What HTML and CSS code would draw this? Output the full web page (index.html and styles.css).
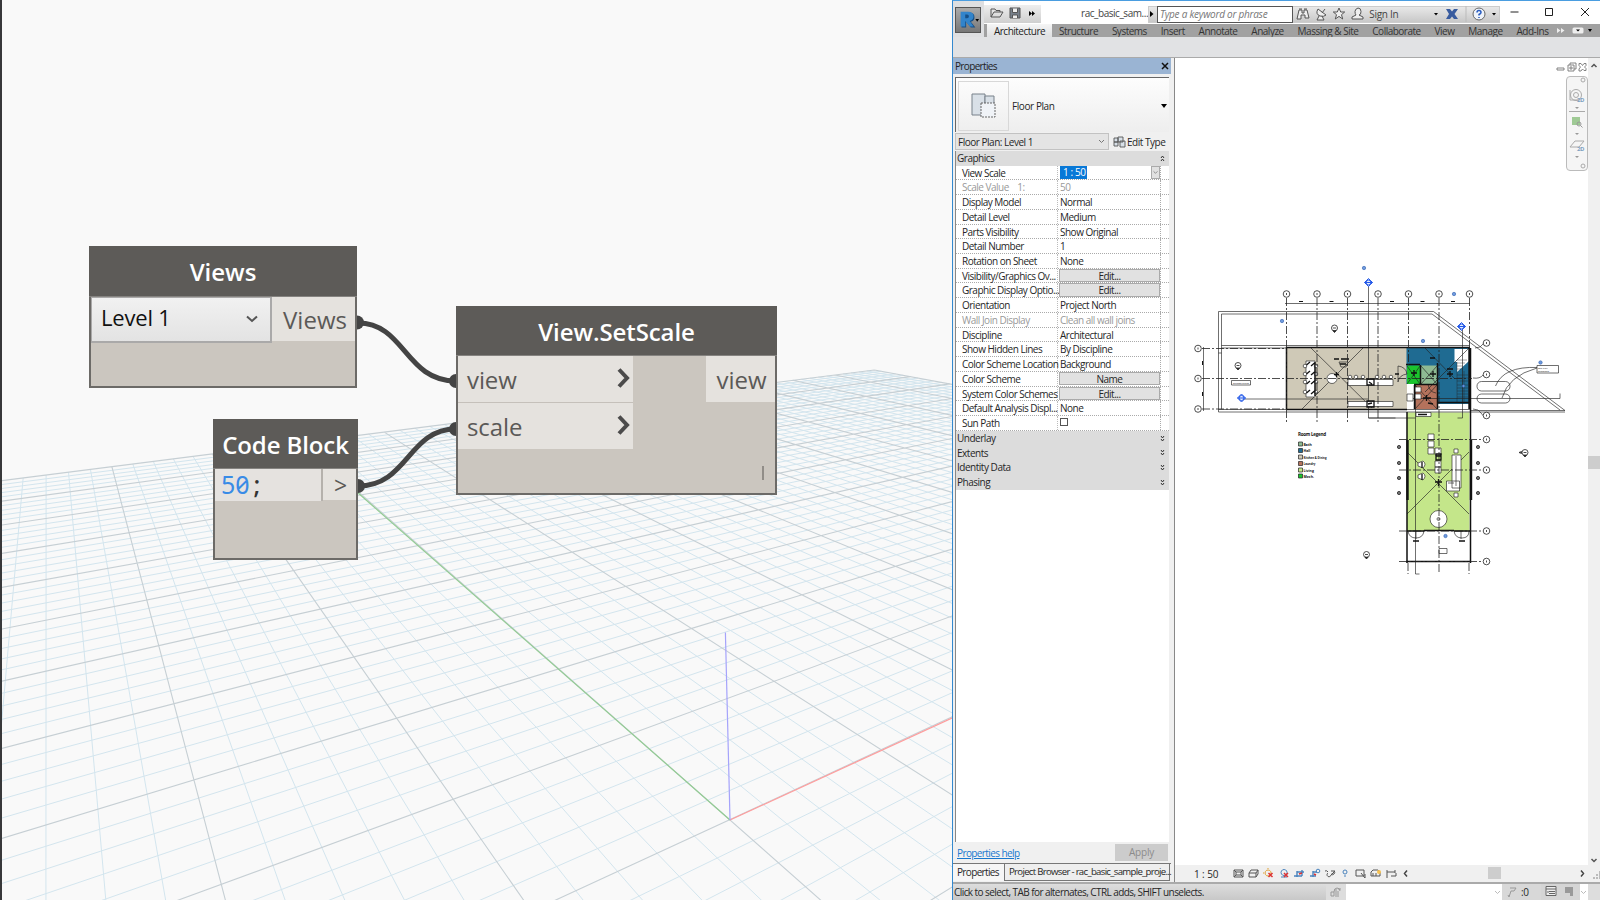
FILE: index.html
```html
<!DOCTYPE html>
<html lang="en">
<head>
<meta charset="utf-8">
<title>Dynamo and Revit</title>
<link rel="stylesheet" href="styles.css">
</head>
<body>
<main class="desk">
<section class="workspace">
  <svg class="scene" viewBox="0 0 952 900">
    <g id="minor" class="minor"></g><g id="major" class="major"></g>
    <path class="axis-y" d="M730 820L357 492"/><path class="axis-x" d="M730 820L952 718"/><path class="axis-z" d="M725.4 632.5L730 820"/>
  </svg>
  <svg class="wires" viewBox="0 0 952 900">
    <path d="M358 323C405 323 405 381 456 381M358 486C408 486 408 429 456 429"/>
    <g><circle cx="357" cy="322.500" r="7"/><circle cx="456" cy="381" r="7"/><circle cx="358" cy="486" r="7"/><circle cx="456" cy="429" r="7"/></g>
  </svg>
  <article class="node views">
    <header>Views</header>
    <div class="ports"><div class="select"><span>Level 1</span><svg width="12" height="8" viewBox="0 0 12 8"><path d="M1 1.500L6 6L11 1.500"/></svg></div><div class="port out">Views</div></div>
  </article>
  <article class="node code">
    <header>Code Block</header>
    <div class="ports"><div class="codetext"><b>50</b><i>;</i></div><div class="port gt">&gt;</div></div>
  </article>
  <article class="node setscale">
    <header>View.SetScale</header>
    <div class="ports"><div class="ins">
      <div class="port in">view<svg width="14" height="22" viewBox="0 0 14 22"><path d="M2 2.500L10 11L2 19.500"/></svg></div>
      <div class="port in">scale<svg width="14" height="22" viewBox="0 0 14 22"><path d="M2 2.500L10 11L2 19.500"/></svg></div></div>
      <div class="port out">view</div></div>
    <footer></footer>
  </article>
</section>

<section class="revit">
  <div class="chrome">
    <div class="app"><svg width="26" height="26" viewBox="0 0 26 26"><path class="rshade" d="M6 5h8q6 0 6 5q0 4-4 5l5 6h-5l-5-6v6H6z"/><path class="rface" d="M5 4h8q6 0 6 5q0 4-4 5l4 6h-4l-5-6v6H5zM10 7v4h2q2 0 2-2t-2-2z"/><path d="M21 12h4l-2 3z"/></svg></div>
    <div class="chrome-rows">
      <div class="titlebar">
        <div class="qat">
          <svg width="58" height="16" viewBox="0 0 58 16"><g class="ico"><path d="M7 12V4h4l1 1.500h4V7M7 12l3-5h9l-3 5z"/><path class="save" d="M26 3h10v10h-10z"/><path class="wh" d="M28.500 3.500v4h5v-4M28.500 13v-3h5v3"/></g><path d="M45 6l3 2.500l-3 2.500zM48 6l3 2.500l-3 2.500z"/></svg>
        </div>
        <span class="doc">rac_basic_sam...</span>
        <div class="info">
          <svg width="8" height="16" viewBox="0 0 8 16"><path d="M1 5l3.500 3l-3.500 3z"/></svg>
          <div class="search">Type a keyword or phrase</div>
          <svg width="72" height="16" viewBox="0 0 72 16"><g class="ico"><path class="wh" d="M4 4h3v3h2V4h3l2 8h-4V9H6v4H2zM4 3h3M9 3h3"/><path class="wh" d="M23 3q-3 5 2 7q4 1 6-1zM27 7l3-4M24 10l-2 4h7l-2-4"/><path class="wh" d="M44 2l1.700 4h4l-3.200 2.700l1.200 4.300l-3.700-2.600l-3.700 2.600l1.200-4.300L38.300 6h4z"/><path class="wh" d="M63 2q3 0 3 3.500T64 9l4 2v2H57v-2l4-2q-1-1-1-3.500T63 2z"/></g></svg>
          <span class="sign">Sign In</span>
          <svg class="exch" width="60" height="16" viewBox="0 0 60 16"><path d="M3 7h4l-2 2.500z"/><path class="x" d="M15 3h4l2 2.500L23 3h4l-3.500 5l3.500 5h-4l-2-2.500l-2 2.500h-4l3-5z"/><path class="sep" d="M35 0v16"/><circle class="q" cx="48" cy="8" r="6"/><path class="qm" d="M46 6.500q0-2 2-2t2 2q0 1-2 2v1M48 11v1"/></svg><svg width="8" height="16" viewBox="0 0 8 16"><path d="M1 7h4l-2 2.500z"/></svg>
        </div>
        <svg class="winbtn" width="100" height="20" viewBox="0 0 100 20"><path d="M10.500 9h8M45.500 5.500h7v7h-7zM81 5l8 8M89 5l-8 8"/></svg>
      </div>
      <nav class="tabs"><span class="on">Architecture</span><span>Structure</span><span>Systems</span><span>Insert</span><span>Annotate</span><span>Analyze</span><span>Massing &amp; Site</span><span>Collaborate</span><span>View</span><span>Manage</span><span>Add-Ins</span>
        <svg width="38" height="13" viewBox="0 0 38 13"><path class="w" d="M1 4l3.500 2.500L1 9zM5 4l3.500 2.500L5 9z"/><rect class="wb" x="16.500" y="3.500" width="11" height="6" rx="1.500"/><path d="M20 5.500h4l-2 2zM32 5h4l-2 3z"/></svg></nav>
    </div>
  </div>
  <div class="ribbon"></div>
  <div class="body">
    <aside class="props">
      <div class="ptitle"><span>Properties</span><svg width="8" height="8" viewBox="0 0 8 8"><path d="M1 1l6 6M7 1L1 7"/></svg></div>
      <div class="typesel"><div class="thumb"><svg width="30" height="30" viewBox="0 0 30 30"><path class="s" d="M3 3h13v21H3z"/><path class="s" d="M16 5h9v8h-9z"/><path class="f" d="M12 12h14v14H12z"/></svg></div><span>Floor Plan</span><svg width="6" height="4" viewBox="0 0 6 4"><path d="M0 0h6L3 4z"/></svg></div>
      <div class="inst"><div class="combo"><span>Floor Plan: Level 1</span><svg width="7" height="5" viewBox="0 0 7 5"><path d="M1 1l2.500 2.500L6 1"/></svg></div><svg class="et" width="13" height="12" viewBox="0 0 13 12"><path d="M1 2h4v4H1zM5 1h5v5H5zM1 6h4v4H1zM7 5h5v6H7z"/></svg><span>Edit Type</span></div>
      <div class="grid" id="grid"></div>
      <div class="blank"></div>
      <div class="help"><a>Properties help</a><span class="apply">Apply</span></div>
      <div class="ptabs"><span>Properties</span><span class="pb">Project Browser - rac_basic_sample_proje...</span></div>
    </aside>
    <section class="view">
      <div class="sheet">
<svg class="plan" viewBox="1175 58 413 806">
<defs><g id="bub"><circle r="3.300"/><path d="M0-1v2"/></g><g id="mark"><circle r="3"/><path class="k" d="M-1.500 2.700h3L0 4.500z"/><path d="M-1.500 0h3"/></g><g id="blued"><path d="M0-4L4 0L0 4L-4 0z"/><circle r="2.500"/><path d="M-4 0h8"/></g></defs>
<path fill="#cfc9b7" d="M1287 348h120v61h-120z"/><path fill="#1f6b92" d="M1406.500 348h63v56h-33v-20h-30z"/><path fill="#1bc42d" d="M1407 365.500h13V384h-13z"/><path fill="#8eba93" d="M1421 365.500h17V384h-17z"/><path fill="#b4725c" d="M1415 385h22.500v24H1415z"/><path fill="#c4e68a" d="M1407 412.500h62.500V531H1407z"/><path fill="#fff" d="M1454.500 349h14.500v12l-12 11v-10h-2.500zM1407 385h8v20h-8z"/>
<g class="ln">
<path d="M1218.500 412V311.500H1433.500L1565 410.500H1470M1221.500 409V314H1432L1560 410M1218.500 412H1565M1221.500 345.500h248M1221.500 348h65M1218.500 353h3M1218.500 409.500H1470M1203.500 347v64M1285 303.500h185M1368.500 285v133h27M1241 399h127M1407 398.500H1560v-5M1462.500 330v88h-5M1415.500 384v190h4M1368.500 418h47"/>
<path d="M1311 348l61 60M1363 348l-61 61M1407 452l62 62M1469 452l-62 62M1425 348l30 31M1469 348l-44 44M1415 385l22 24M1437 385l-22 24M1407 366l13 18M1420 366l-13 18M1421 366l16 18M1437 366l-16 18"/>
<path d="M1398 366q8 1 9 8q-8 1-9 8zM1428 384q1 8 8 9M1475 348q6 0 8-4t4-2M1473 378q7 1 10-3h3M1473 409q6 0 8 4t5 3M1408 531q1 7 8 7q7 0 8-7M1454 531q1 7 8 7q7 0 7-7M1416 531v8M1461 531v8M1495.500 386q8-20 42-18.500M1502 398q6-22 35-30"/>
<path d="M1457 360h10M1457 363h8M1457 366h6M1457 369h4M1457 375h11M1457 378h11M1457 381h11M1457 385h11M1457 388h11M1457 391h11M1457 394h11M1457 397h11M1457 362v40M1464 371v33" opacity=".6"/>
<rect x="1477" y="381.500" width="33" height="9.500" rx="4.500"/><rect x="1477" y="394" width="33" height="9" rx="4.500"/>
<path class="fw" d="M1306 361h9v36h-9zM1348 379.500h45v6h-45zM1348 401.500h45v5h-45zM1428 434h6v6h-6zM1428 441h6v6h-6zM1428 448h6v6h-6zM1435 448h6v7h-6zM1435 461h6v6h-6zM1435 467h6v6h-6zM1452 455h9v33h-9zM1454 449h4v4h-4zM1454 493h4v4h-4zM1446.500 481h13v10h-13zM1416 412.500h15v4h-15zM1415 387h6v5h-6zM1415 394h6v5h-6zM1231.500 380.500h19v4.500h-19zM1537 365.500h21.500v7.500H1537zM1439 548.500h8v5h-8zM1407 394h6v7h-6z"/>
<circle class="fw" cx="1332" cy="378.500" r="5"/><circle class="fw" cx="1438.500" cy="519" r="8.500"/><circle cx="1438.500" cy="519" r="1.500"/>
<g class="fw"><circle cx="1305" cy="366" r="1.800"/><circle cx="1305" cy="374" r="1.800"/><circle cx="1305" cy="382" r="1.800"/><circle cx="1305" cy="392" r="1.800"/><circle cx="1316" cy="366" r="1.800"/><circle cx="1316" cy="374" r="1.800"/><circle cx="1316" cy="382" r="1.800"/><circle cx="1316" cy="392" r="1.800"/><circle cx="1350" cy="377" r="1.800"/><circle cx="1356" cy="377" r="1.800"/><circle cx="1363" cy="377" r="1.800"/><circle cx="1377" cy="377" r="1.800"/><circle cx="1384" cy="377" r="1.800"/><circle cx="1391" cy="377" r="1.800"/><path d="M1418 463l5-2q4 3 0 7l-5-2zM1418 475l5-2q4 3 0 7l-5-2z"/></g>
<path d="M1339 362h9l-2 5h-5z"/><path d="M1456 456v30M1448 483h6"/>
</g>
<g class="thick"><path d="M1286.500 409.500V347.500H1470M1286.500 409.500H1407M1407 412V563M1470.500 348V563M1406 561.500h65M1407 531h17M1454 531h16M1424 530.500h30M1406 364.500h14M1420.500 365v20M1437.500 363v46M1414 384.500h24M1414.500 385v24M1438 402.500h31"/><path class="xt" d="M1469.500 348v61M1407.500 440v60M1471 440v60"/></g>
<g class="dark"><path d="M1306.500 365l3.500-3M1311 366l3.500-3M1306.500 374l3.500-3M1311 375l3.500-3M1306.500 384l3.500-3M1311 384l3.500-3M1306.500 393l3.500-3M1311 394l3.500-3M1315 362v34M1367 379h7v6h-7zM1367 401h7v6h-7zM1369 382l3 2M1368 404l4-1M1334 374.500h5M1336.500 372v5M1334 359h5M1341 359h8M1340 364h6M1411 373h6M1414 370v6M1430 374h6M1433 371v6M1447 374h6M1450 371v6M1447 369h6M1423 398h8M1426.500 395v6M1428 403l5 1M1435 482h7M1438.500 479v7M1436 454h5v6h-5zM1430 358h5M1436 456h5M1422 462v6M1422 474v6M1418 414.500h9M1413 541h6M1459 541h6M1395 374h4"/><path class="tick" d="M1299 301.500h4M1329.500 301.500h4M1360 301.500h4M1390 301.500h4M1420.500 301.500h4M1451 301.500h4M1202.500 361v4M1202.500 392v4"/></g>
<g class="dd"><path d="M1286.500 298v124M1317 298v124M1347.500 298v124M1378 298v124M1408.500 298v67M1439 298v275M1469.500 298v50M1202 348.500h84M1202 378.500h270M1202 409h84M1399 439.500h82M1399 470h82M1399 531h82M1399 561.500h82M1408 563v11M1469 563v11"/></g>
<g class="bub"><use href="#bub" x="1286.500" y="294"/><use href="#bub" x="1317" y="294"/><use href="#bub" x="1347.500" y="294"/><use href="#bub" x="1378" y="294"/><use href="#bub" x="1408.500" y="294"/><use href="#bub" x="1439" y="294"/><use href="#bub" x="1469.500" y="294"/><use href="#bub" x="1198" y="348.500"/><use href="#bub" x="1198" y="378.500"/><use href="#bub" x="1198" y="409"/><use href="#bub" x="1486.500" y="343"/><use href="#bub" x="1486.500" y="374.500"/><use href="#bub" x="1486.500" y="415.500"/><use href="#bub" x="1486.500" y="439.500"/><use href="#bub" x="1486.500" y="470"/><use href="#bub" x="1486.500" y="531"/><use href="#bub" x="1486.500" y="561.500"/>
<use href="#mark" x="1334.500" y="328"/><use href="#mark" x="1238" y="365.500"/><use href="#mark" x="1525" y="452.500"/><use href="#mark" x="1366.500" y="554.500"/></g>
<g class="cam"><circle cx="1399" cy="447" r="1.600"/><circle cx="1399" cy="463" r="1.600"/><circle cx="1399" cy="478" r="1.600"/><circle cx="1399" cy="493" r="1.600"/><circle cx="1478" cy="447" r="1.600"/><circle cx="1478" cy="463" r="1.600"/><circle cx="1478" cy="478" r="1.600"/><circle cx="1478" cy="493" r="1.600"/><path d="M1519 452.500l2.500-1v2z"/></g>
<g class="bl"><use href="#blued" x="1368.500" y="282.500"/><use href="#blued" x="1241.500" y="398"/><use href="#blued" x="1461.500" y="326.500"/></g>
<g class="bd"><circle cx="1364" cy="268" r="1.700"/><circle cx="1282" cy="321" r="1.700"/><circle cx="1454" cy="294" r="1.700"/><circle cx="1423" cy="341" r="1.700"/><circle cx="1540.500" cy="362.500" r="1.700"/><circle cx="1445.500" cy="536" r="1.700"/><circle cx="1463.500" cy="386" r="1.300"/></g>
<g class="leg"><path fill="#8eba93" d="M1298.500 442h4v4h-4z"/><path fill="#1f6b92" d="M1298.500 448.500h4v4h-4z"/><path fill="#cfc9b7" d="M1298.500 455h4v4h-4z"/><path fill="#b4725c" d="M1298.500 461.500h4v4h-4z"/><path fill="#c4e68a" d="M1298.500 468h4v4h-4z"/><path fill="#1bc42d" d="M1298.500 474h4v4h-4z"/></g>
<g class="lt"><text class="lh" x="1298" y="436" textLength="28">Room Legend</text><text x="1303.500" y="445.500">Bath</text><text x="1303.500" y="452">Hall</text><text x="1303.500" y="458.500" textLength="23" lengthAdjust="spacingAndGlyphs">Kitchen &amp; Dining</text><text x="1303.500" y="465" textLength="12" lengthAdjust="spacingAndGlyphs">Laundry</text><text x="1303.500" y="471.500">Living</text><text x="1303.500" y="478">Mech.</text><text class="sm" x="1233" y="384" textLength="16" lengthAdjust="spacingAndGlyphs">Outdoor Dining</text><text class="sm" x="1538" y="368.500">See Civil</text><text class="sm" x="1538" y="371.800">Drawings</text></g>
</svg>
      <div class="mdi"><svg width="32" height="10" viewBox="0 0 32 10"><path d="M1 6h7v2H1zM12 3h6v6h-6zM14 3V1h6v6h-2M14 5h2v2h-2zM23 1.500h2l1.500 2l1.500-2h2v2l-1.500 1.500l1.500 1.500v2h-2L26.500 7L25 9h-2V7l1.500-2L23 3.500z"/></svg></div>
      <div class="navbar"><svg width="22" height="95" viewBox="0 0 22 95"><g class="nv"><circle cx="17" cy="4" r="2"/><circle cx="10" cy="19" r="5.500"/><circle cx="10" cy="19" r="2.500"/><path d="M4 14v10h9"/><path d="M3 35.500h16M4 71l5-6h9l-5 6z"/><circle cx="17" cy="90" r="2"/></g><path class="gr" d="M6 41h8v8H6z"/><circle class="mg" cx="13" cy="48" r="2"/><path class="mg" d="M14.500 49.500l2 2"/><path d="M9 31h4l-2 2zM9 57h4l-2 2zM9 80h4l-2 2z"/><text x="11" y="26">2D</text><text x="11" y="75">2D</text></svg></div>
      </div>
      <div class="vscroll"><svg width="12" height="806" viewBox="0 0 12 806"><path d="M3.500 9L6 6.500L8.500 9M3.500 801L6 803.500L8.500 801"/><path class="thumbv" d="M0 398h12v13H0z"/></svg></div>
      <div class="viewbar"><span>1 : 50</span>
        <svg width="375" height="16" viewBox="1225 0 375 16"><g class="vi"><path d="M1234 3h9v7h-9zM1236 5h5v3h-5zM1234 3l2 2M1243 3l-2 2M1234 10l2-2M1243 10l-2-2M1249 6l2-3h7v4l-2 3h-7zM1249 6h7l2-3M1256 6v4"/><path class="org" d="M1268 3a3 3 0 1 0 .1 0M1268 1v1M1264 6h-1"/><path class="red" d="M1268.500 6l4 4M1272.500 6l-4 4"/><path class="blu" d="M1284 2.500a3 3 0 1 0 .1 0M1281 10h6"/><path class="red" d="M1284 6l4 4M1288 6l-4 4"/><path class="blu th2" d="M1297 4v6M1294 9h8M1297 5h7M1302 3v6M1313 4v6M1310 9h6M1313 5h4"/><circle class="blu" cx="1318" cy="4" r="1.800"/><path class="red" d="M1299 7l3-1M1314 7l2 1"/><path d="M1325 4q2-1 3 1M1328 6a2 2 0 1 0 3 2l4-4h-4M1334 4a2 2 0 1 1-3 3"/><circle class="blu" cx="1345" cy="5" r="2"/><path class="blu" d="M1345 8v2"/><path d="M1356 3h8v6h-8zM1361 6l4 5v-4M1371 9V5l2-2h5l2 2v4zM1373 6v3M1376 6v3M1387 3v8M1387 5h8M1395 3v3M1391 9h5v-3"/><circle class="yel" cx="1379" cy="5" r="2"/></g><path class="arr" d="M1407 3.500l-2.500 3L1407 9.500M1581 3.500l2.500 3l-2.500 3"/><path class="th" d="M1488 0h13v12h-13z"/><path class="grip" d="M1593 10h2v2h-2zM1596 7h2v2h-2zM1596 10h2v2h-2zM1599 4h1v8h-1z"/></svg></div>
    </section>
  </div>
  <footer class="status"><span class="msg">Click to select, TAB for alternates, CTRL adds, SHIFT unselects.</span>
    <div class="set"><svg width="12" height="12" viewBox="0 0 12 12"><path d="M1 6h3v4H1zM4 6q0-4 3-4t3 3M8 5v6M6 3v8M8 3h3"/></svg></div>
    <div class="ws"><svg width="7" height="5" viewBox="0 0 7 5"><path d="M1 1l2.500 2.500L6 1"/></svg></div>
    <div class="zero"><svg width="12" height="12" viewBox="0 0 12 12"><path d="M4 2h6l-2 3H5L3 11L2 9"/></svg>:0</div>
    <div class="opts"><svg width="43" height="14" viewBox="0 0 43 14"><path class="o" d="M5 2.500h10v9H5zM5 5h10M8 7.500h6M8 9.500h6M7 7v2"/><path class="g" d="M24 3h8v9h-3V9h-5z"/></svg></div>
    <div class="last"><svg width="7" height="5" viewBox="0 0 7 5"><path d="M1 1l2.500 2.500L6 1"/></svg></div><div class="end"></div>
  </footer>
</section>
</main>
<script src="app.js"></script>
</body>
</html>
```
FILE: styles.css
```css
*{box-sizing:border-box}
body{margin:0;width:1600px;height:900px;overflow:hidden;font-family:"Open Sans","Noto Sans",sans-serif}
svg{display:block;flex:none}
.desk{display:grid;grid-template-columns:952px 648px;height:900px}
.workspace{position:relative;background:#f9f9f9;border-left:2px solid #38383a;overflow:hidden}
.scene,.wires{position:absolute;left:-2px;top:0;width:952px;height:900px;fill:none}
.minor{stroke:#d3e5ee;stroke-width:1}
.major{stroke:#c6cfd4;stroke-width:1.100}
.axis-x{stroke:#ff9c9c;stroke-width:1.200}
.axis-y{stroke:#92cb92;stroke-width:1.200}
.axis-z{stroke:#a5a3fb;stroke-width:1.200}
.wires>path{stroke:#444;stroke-width:5}
.wires circle{fill:#444}
.node{position:absolute;background:#cbc6bf;border:2px solid #6c6a67;display:flex;flex-direction:column;color:#5b5957;font-size:24px}
.node header{background:#5d5b58;color:#fff;font-weight:600;display:flex;align-items:center;justify-content:center;white-space:nowrap;margin:-2px -2px 0;padding-top:1px;border-bottom:1px solid #858380}
.views{left:87px;top:246px;width:268px;height:142px}
.views header{height:51px}
.code{left:211px;top:419px;width:145px;height:141px}
.code header{height:50px;letter-spacing:-.1px}
.setscale{left:454px;top:306px;width:321px;height:189px}
.setscale header{height:50px;letter-spacing:-.08px}
.ports{display:flex;justify-content:space-between;align-items:flex-start}
.port{background:#e5e2de;display:flex;align-items:center}
.select{width:181px;height:46px;border:1px solid #aaa9a9;border-width:1px 2px 2px 1px;background:linear-gradient(#f1f1f1,#e3e3e3);display:flex;justify-content:space-between;padding:4px 12px 0 9px;color:#111;font-size:22px;line-height:30px;letter-spacing:-.2px}
.select svg{margin-top:13px}
.select path{fill:none;stroke:#555;stroke-width:2}
.views .out{width:83px;height:44px;justify-content:center;padding:1px 0 0 3px}
.codetext{width:108px;height:32px;background:#e5e2df;border-right:2px solid #b5b1ac;font-family:"Noto Sans",sans-serif;font-size:25px;line-height:31px;padding-left:6px;font-variant-numeric:slashed-zero}
.codetext b{font-weight:400;color:#398be6}
.codetext i{font-style:normal;font-weight:500;color:#333;padding-left:4px}
.gt{width:33px;height:31px;justify-content:center;font-size:23px;padding-left:2px}
.ins{display:flex;flex-direction:column;gap:1px;width:175px;background:#c5c0ba}
.in{height:46px;padding:1px 2px 1px 9px;justify-content:space-between;letter-spacing:-.1px}
.in svg{margin-top:-3px}
.in path{fill:none;stroke:#4c4b4b;stroke-width:4}
.setscale .out{width:69px;height:46px;justify-content:center;padding:1px 0 1px 2px}
.setscale footer{width:2px;height:14px;background:#918d88;margin:17px 0 0 304px}

.revit{border-left:1px solid #3489cf;border-top:1px solid #4a9de0;background:#f0f0f0;display:flex;flex-direction:column;font-size:10px;color:#262626;white-space:nowrap;min-width:0;letter-spacing:-.46px}
.chrome{height:36px;display:flex;background:#fff}
.app{width:31px;height:36px;background:#dedfe1;padding:6px 2px 3px}
.app svg{background:linear-gradient(#aaa,#777);border:1px solid #555}
.rshade{fill:#174f86}.rface{fill:#3284cb;fill-rule:evenodd}
.chrome-rows{flex:1;display:flex;flex-direction:column;min-width:0}
.titlebar{height:23px;display:flex;align-items:center;background:#fff;padding-top:3px}
.qat{height:18px;width:57px;background:linear-gradient(#eee,#cfcfcf)}
.ico{fill:none;stroke:#555;stroke-width:1}
.save{fill:#77808b}.wh{fill:#eee}
.doc{width:107px;padding:0 0 2px 40px;color:#444}
.info{height:17px;width:352px;background:linear-gradient(#e8e8e8,#c8c8c8);display:flex;align-items:center;border:1px solid #ccc}
.search{width:141px;height:17px;background:#fff;border:1px solid #555;color:#777;font-style:italic;padding:0 2px;line-height:15px;letter-spacing:-.25px;margin-right:2px}
.sign{width:66px;padding-left:2px;color:#444;letter-spacing:-.3px}
.x{fill:#395c9f}.sep{stroke:#bbb}.q{fill:#eef3fa;stroke:#666}.qm{fill:none;stroke:#285cc0;stroke-width:1.500}
.winbtn{margin-top:-3px}
.winbtn path{fill:none;stroke:#222}
.tabs{height:13px;background:#a1a1a1;display:flex;align-items:center;line-height:15px;color:#333;padding-left:3px;letter-spacing:-.5px}
.tabs span{padding:0 6.950px;height:13px;flex:none}
.tabs .on{background:linear-gradient(#f5f5f5,#dfe0e2);color:#222}
.tabs .w,.wb{fill:#eee}
.tabs svg{margin-left:1px}
.ribbon{height:21px;background:#e1e2e4;border-bottom:1px solid #aaa}
.body{flex:1;display:flex;min-height:0}
.props{width:218px;background:#f0f0f0;display:flex;flex-direction:column}
.ptitle{height:16px;background:#9ab4d3;display:flex;justify-content:space-between;align-items:center;padding:0 2px;color:#222}
.ptitle span{letter-spacing:-.65px}
.ptitle path{stroke:#111;stroke-width:1.500}
.typesel{height:55px;margin:3px 2px 0 2px;border:1px solid #666;border-width:1px 0 0 1px;background:linear-gradient(#fdfdfd,#eee);display:flex;align-items:center;padding:3px 2px 1px}
.thumb{width:51px;height:50px;border:1px solid #d8d8d8;display:flex;align-items:center;justify-content:center}
.thumb .s{fill:#d9e0e7;stroke:#78818a}.thumb .f{fill:#f0f3f7;stroke:#666;stroke-dasharray:2 1}
.typesel>span{padding-left:3px;flex:1;letter-spacing:-.42px}
.inst{height:19px;padding:1px 2px 1px 2px;display:flex;align-items:center}
.combo{width:154px;height:17px;background:#e4e4e4;border:1px solid #c2c2c2;display:flex;align-items:center;justify-content:space-between;padding:0 3px 0 2px}
.combo path,.ws path,.last path,.vs path{fill:none;stroke:#777}
.inst>span,.combo>span{letter-spacing:-.48px}
.et{margin:0 1px 0 4px}.et path{fill:#d8e0e8;stroke:#555;stroke-width:.9}
.grid{margin:0 2px 0 2px;border-left:1px solid #888}
.grp,.row{height:14.730px;display:flex;align-items:center}
.grp{background:#dcdcdc;padding:0 4px 0 1px;justify-content:space-between;letter-spacing:-.48px}
.grp svg path{fill:none;stroke:#222;stroke-width:.9}
.row{background:#fff;border-bottom:1px dotted #aaa}
.row .n{width:102px;height:100%;padding-left:6px;border-right:1px dotted #bbb;line-height:14px;letter-spacing:-.5px}
.row .v{width:103px;height:100%;padding-left:2px;line-height:14px;border-right:1px dotted #aaa;letter-spacing:-.5px}
.row.dim{color:#999}
.btn{display:block;height:13.500px;background:#e1e1e1;border:1px solid #aaa;text-align:center;line-height:12.500px;margin-left:-1px}
.row .vs{display:flex;justify-content:space-between;align-items:center}
.vs b{font-weight:400;background:#0878d7;color:#fff;height:13px;line-height:13px;padding:0 1px 0 3px;letter-spacing:-.4px}
.vs svg{width:9px;height:13px;background:#e1e1e1;border:1px solid #aaa}
.box{display:block;width:8px;height:8px;border:1px solid #555;margin-top:2px}
.blank{flex:1;background:#fff;margin:0 2px 0 2px;border-left:1px solid #888}
.help{height:21px;display:flex;justify-content:space-between;align-items:center;padding:0 3px 0 2px;border-left:2px solid #f0f0f0}
.help a{color:#1878cf;text-decoration:underline;letter-spacing:-.6px}
.apply{width:53px;height:17px;background:#ccc;color:#8b8b8b;text-align:center;line-height:17px;letter-spacing:-.2px}
.ptabs{height:19px;display:flex;border-top:1px solid #777;line-height:16px;padding-bottom:1px}
.ptabs span{padding-left:4px;width:51px;background:#f6f6f6;letter-spacing:-.65px}
.ptabs .pb{width:166px;border:1px solid #777;border-top:0;background:#eee;font-size:9.600px;letter-spacing:-.69px}
.view{flex:1;margin-left:3px;border-left:1px solid #888;display:grid;grid-template-columns:413px 12px;grid-template-rows:1fr 17px;min-width:0}
.sheet{background:#fff;position:relative;overflow:hidden}
.plan{width:413px;height:806px;letter-spacing:0}
.ln{fill:none;stroke:#222;stroke-width:.65}
.fw{fill:#fff}
.thick{fill:none;stroke:#111;stroke-width:1.500}.xt{stroke-width:2.400}
.dark{fill:none;stroke:#111;stroke-width:1.300}.tick{stroke-width:1}
.dd{fill:none;stroke:#222;stroke-width:.8;stroke-dasharray:8 2 2 2}
.bub{fill:#fff;stroke:#222;stroke-width:.8}.k{fill:#222}
.cam{fill:#777;stroke:#222;stroke-width:.8}
.bl{fill:#dfeaff;stroke:#2459e8;stroke-width:1}
.bd{fill:#6e9ade;stroke:#315fae;stroke-width:.6}
.leg{stroke:#222;stroke-width:.7}
.lt{font-size:3.500px;font-weight:700;fill:#111}.lh{font-size:4.500px}.sm{font-size:2.500px;font-weight:400}
.mdi{position:absolute;right:0;top:4px}.mdi path{fill:none;stroke:#777;stroke-width:.9}
.navbar{position:absolute;right:0;top:18px;width:22px;height:95px;border:1px solid #bbb;border-radius:4px;background:#f5f5f5}
.navbar svg{margin:-1px}.nv{fill:none;stroke:#aaa}.gr{fill:#9fca95}.mg{fill:none;stroke:#999}.navbar text{font-size:6px;fill:#7da0bf;font-weight:700}.navbar svg>path:not([class]){fill:#999}
.vscroll{background:#f0f0f0}.vscroll path{fill:none;stroke:#555;stroke-width:1.500}.vscroll .thumbv{fill:#cdcdcd;stroke:none}
.viewbar{grid-column:1/3;background:#f0f0f0;display:flex;line-height:14px;padding-top:2px}
.viewbar>span{width:50px;padding-left:19px;letter-spacing:-.1px}
.vi{fill:none;stroke:#555}.vi .org{stroke:#e0a030}.vi .red{stroke:#d33;stroke-width:1.500}.vi .blu{stroke:#4a83bd}.vi .th2{stroke-width:1.400}.vi .yel{fill:#f7c150;stroke:none}
.arr{fill:none;stroke:#444;stroke-width:1.500}.th{fill:#cdcdcd}.grip{fill:#bbb}
.status{height:18px;border-top:2px solid #aaa;background:linear-gradient(#ddd,#c8c8c8);display:flex;align-items:stretch}
.msg{width:373px;padding-left:1px;line-height:16px;letter-spacing:-.57px}
.set{width:20px;background:#ddd;padding:2px 4px}.set path,.zero path{fill:none;stroke:#999}
.ws{width:156px;background:#fff;display:flex;justify-content:flex-end;align-items:center;padding-right:1px}
.ws path,.last path{stroke:#bbb}
.zero{width:39px;background:#d8d8d8;display:flex;align-items:center;padding-left:4px;gap:3px}
.opts{width:39px;background:#d5d5d5;overflow:hidden}.o{fill:#eee;stroke:#666}.g{fill:#999}
.last{width:8px;background:#fff;display:flex;align-items:center}.end{flex:1;background:#ddd}
```
FILE: app.js
```js
// Perspective projection of the ground plane, one unit per major square.
function project(u, v) {
  const w = 1 + 0.1666 * u + 0.1334 * v;
  return [(729.6 + 7.7 * u + 269.1 * v) / w, (819.7 + 36 * u + 30 * v) / w];
}
const paths = { minor: '', major: '' };
for (let i = -50; i <= 50; i++) {
  const k = i / 5, key = i % 5 ? 'minor' : 'major';
  const v0 = Math.max(-10, (0.25 - 1 - 0.1666 * k) / 0.1334);
  const u0 = Math.max(-10, (0.25 - 1 - 0.1334 * k) / 0.1666);
  if (v0 < 10) paths[key] += 'M' + project(k, v0) + 'L' + project(k, 10);
  if (u0 < 10) paths[key] += 'M' + project(u0, k) + 'L' + project(10, k);
}
for (const key in paths) document.getElementById(key).innerHTML = '<path d="' + paths[key] + '"/>';

const rows = [
  ['View Scale', '1 : 50', 'scale'], ['Scale Value &nbsp;&nbsp; 1:', '50', 'dim'], ['Display Model', 'Normal'],
  ['Detail Level', 'Medium'], ['Parts Visibility', 'Show Original'], ['Detail Number', '1'],
  ['Rotation on Sheet', 'None'], ['Visibility/Graphics Ov...', 'Edit...', 'btn'],
  ['Graphic Display Optio...', 'Edit...', 'btn'], ['Orientation', 'Project North'],
  ['Wall Join Display', 'Clean all wall joins', 'dim'], ['Discipline', 'Architectural'],
  ['Show Hidden Lines', 'By Discipline'], ['Color Scheme Location', 'Background'],
  ['Color Scheme', 'Name', 'btn'], ['System Color Schemes', 'Edit...', 'btn'],
  ['Default Analysis Displ...', 'None'], ['Sun Path', '', 'box']
];
const group = (name, up) => '<div class="grp"><span>' + name + '</span><svg width="5" height="7" viewBox="0 0 5 7"><path d="' +
  (up ? 'M1 3L2.5 1L4 3M1 6L2.5 4L4 6' : 'M1 1L2.5 3L4 1M1 4L2.5 6L4 4') + '"/></svg></div>';
const row = ([name, value, kind]) => {
  let cell = value;
  if (kind === 'btn') cell = '<span class="btn">' + value + '</span>';
  if (kind === 'box') cell = '<span class="box"></span>';
  if (kind === 'scale') cell = '<b>' + value + '</b><svg viewBox="0 0 9 13"><path d="M2 5l2.500 2.500L7 5"/></svg>';
  return '<div class="row' + (kind === 'dim' ? ' dim' : '') + '"><span class="n">' + name + '</span><span class="v' +
    (kind === 'scale' ? ' vs' : '') + '">' + cell + '</span></div>';
};
document.getElementById('grid').innerHTML = group('Graphics', true) + rows.map(row).join('') +
  ['Underlay', 'Extents', 'Identity Data', 'Phasing'].map(n => group(n, false)).join('');
```
